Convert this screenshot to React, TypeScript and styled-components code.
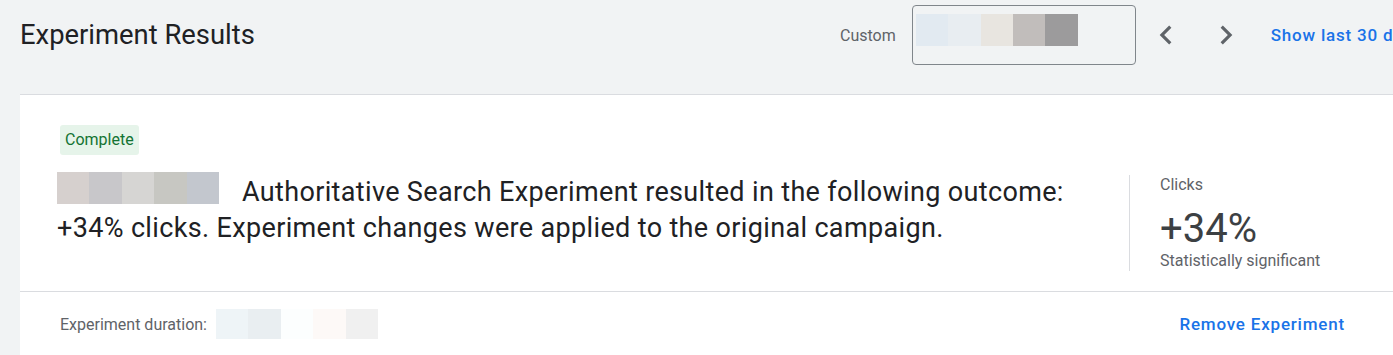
import React from "react";
import styled, { createGlobalStyle } from "styled-components";

const GlobalStyle = createGlobalStyle`
  html, body {
    margin: 0;
    padding: 0;
    background: #f1f3f4;
    overflow: hidden;
    font-family: Roboto, "Liberation Sans", Arial, sans-serif;
  }
  * { box-sizing: border-box; }
`;

const Page = styled.div`
  width: 1440px;
`;

const Header = styled.header`
  height: 70px;
  padding: 0 20px;
  display: grid;
  grid-template-columns: 820px auto;
  align-items: center;
`;

const Title = styled.h1`
  margin: 0;
  font-size: 27.4px;
  font-weight: 400;
  color: #202124;
  white-space: nowrap;
`;

const Controls = styled.div`
  display: flex;
  align-items: center;
`;

const RangeLabel = styled.span`
  font-size: 16px;
  color: #5f6368;
  margin-right: 16px;
`;

const DateBox = styled.div`
  width: 224px;
  height: 60px;
  border: 1px solid #80868b;
  border-radius: 4px;
  padding: 8px 3px;
  display: flex;
  align-items: flex-start;
`;

const Redacted = styled.div`
  display: inline-flex;
  flex: none;
`;

const Pixel = styled.span<{ $c: string; $w?: number; $h: number }>`
  display: block;
  width: ${(p) => p.$w ?? 32.4}px;
  height: ${(p) => p.$h}px;
  background: ${(p) => p.$c};
`;

const NavGroup = styled.div`
  display: flex;
  gap: 22px;
  margin: 0 26px 0 11px;
`;

const NavButton = styled.button`
  width: 38px;
  height: 38px;
  padding: 0;
  border: 0;
  background: none;
  color: #5f6368;
  display: flex;
  cursor: pointer;
`;

const LinkButton = styled.button`
  border: 0;
  background: none;
  padding: 0;
  font-family: inherit;
  font-size: 17px;
  font-weight: 500;
  color: #1a73e8;
  white-space: nowrap;
  cursor: pointer;
  letter-spacing: 0.8px;
`;

const Card = styled.section`
  margin: 24px 20px 0;
  background: #fff;
  border-top: 1px solid #dadce0;
`;

const CardBody = styled.div`
  padding: 30px 40px 20px 40px;
`;

const Chip = styled.span`
  display: inline-block;
  height: 30px;
  line-height: 30px;
  padding: 0 5px;
  border-radius: 3px;
  background: #e6f4ea;
  color: #137333;
  font-size: 16px;
`;

const Row = styled.div`
  display: flex;
  align-items: flex-start;
  margin-top: 17px;
`;

const Summary = styled.p`
  flex: 1;
  margin: 0 0 0 -3px;
  font-size: 27px;
  letter-spacing: 0.35px;
  line-height: 36px;
  color: #202124;
`;

const SummaryName = styled(Redacted)`
  vertical-align: -3px;
  margin-right: 23px;
`;

const Metric = styled.div`
  flex: 0 0 251px;
  margin-top: 3px;
  border-left: 1px solid #dadce0;
  padding-left: 30px;
`;

const MetricLabel = styled.div`
  font-size: 16px;
  line-height: 20px;
  color: #5f6368;
`;

const MetricValue = styled.div`
  margin-top: 12px;
  font-size: 40px;
  line-height: 44px;
  color: #3c4043;
`;

const Footer = styled.footer`
  height: 65px;
  border-top: 1px solid #dadce0;
  padding: 0 75px 0 40px;
  display: flex;
  align-items: center;
  justify-content: space-between;
`;

const Duration = styled.div`
  display: flex;
  align-items: center;
  gap: 9px;
  font-size: 16px;
  color: #5f6368;
`;

const ChevronLeft = () => (
  <svg width="38" height="38" viewBox="0 0 24 24" fill="currentColor">
    <path d="M15.41 7.41 14 6l-6 6 6 6 1.41-1.41L10.83 12z" />
  </svg>
);

const ChevronRight = () => (
  <svg width="38" height="38" viewBox="0 0 24 24" fill="currentColor">
    <path d="M10 6 8.59 7.41 13.17 12l-4.58 4.59L10 18l6-6z" />
  </svg>
);

const dateColors = ["#e2eaf1", "#e8edf1", "#e8e5e0", "#c1bdbb", "#9c9b9c"];
const nameColors = ["#d6d0ce", "#c8c7ca", "#d6d5d3", "#c7c7c2", "#c3c7ce"];
const durationColors = ["#eef4f7", "#e9eef1", "#fcfefe", "#fdf9f7", "#f0f0f0"];

export default function App() {
  return (
    <Page>
      <GlobalStyle />
      <Header>
        <Title>Experiment Results</Title>
        <Controls>
          <RangeLabel>Custom</RangeLabel>
          <DateBox>
            <Redacted>
              {dateColors.map((c) => (
                <Pixel key={c} $c={c} $h={32} />
              ))}
            </Redacted>
          </DateBox>
          <NavGroup>
            <NavButton aria-label="Previous period">
              <ChevronLeft />
            </NavButton>
            <NavButton aria-label="Next period">
              <ChevronRight />
            </NavButton>
          </NavGroup>
          <LinkButton>Show last 30 days</LinkButton>
        </Controls>
      </Header>
      <Card>
        <CardBody>
          <Chip>Complete</Chip>
          <Row>
            <Summary>
              <SummaryName>
                {nameColors.map((c) => (
                  <Pixel key={c} $c={c} $h={32} />
                ))}
              </SummaryName>
              Authoritative Search Experiment resulted in the following outcome:
              <br />
              +34% clicks. Experiment changes were applied to the original campaign.
            </Summary>
            <Metric>
              <MetricLabel>Clicks</MetricLabel>
              <MetricValue>+34%</MetricValue>
              <MetricLabel>Statistically significant</MetricLabel>
            </Metric>
          </Row>
        </CardBody>
        <Footer>
          <Duration>
            Experiment duration:
            <Redacted>
              {durationColors.map((c) => (
                <Pixel key={c} $c={c} $h={30} />
              ))}
            </Redacted>
          </Duration>
          <LinkButton>Remove Experiment</LinkButton>
        </Footer>
      </Card>
    </Page>
  );
}
